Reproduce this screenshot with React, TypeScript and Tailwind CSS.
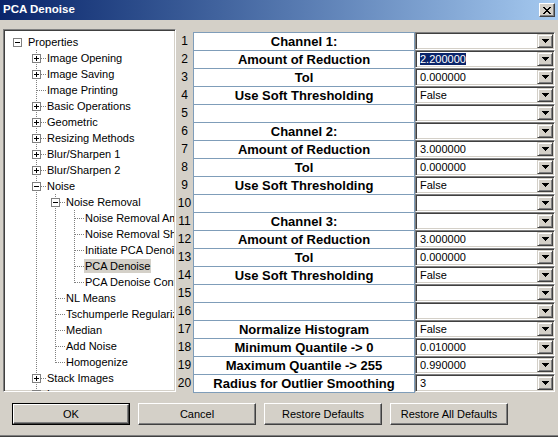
import React from "react";

type Node = {
  label: string;
  depth: number;
  box?: "+" | "-";
  last?: boolean;
  selected?: boolean;
};

const tree: Node[] = [
  { label: "Properties", depth: 0, box: "-" },
  { label: "Image Opening", depth: 1, box: "+" },
  { label: "Image Saving", depth: 1, box: "+" },
  { label: "Image Printing", depth: 1 },
  { label: "Basic Operations", depth: 1, box: "+" },
  { label: "Geometric", depth: 1, box: "+" },
  { label: "Resizing Methods", depth: 1, box: "+" },
  { label: "Blur/Sharpen 1", depth: 1, box: "+" },
  { label: "Blur/Sharpen 2", depth: 1, box: "+" },
  { label: "Noise", depth: 1, box: "-" },
  { label: "Noise Removal", depth: 2, box: "-" },
  { label: "Noise Removal Amount", depth: 3 },
  { label: "Noise Removal Sharpness", depth: 3 },
  { label: "Initiate PCA Denoise", depth: 3 },
  { label: "PCA Denoise", depth: 3, selected: true },
  { label: "PCA Denoise Control", depth: 3, last: true },
  { label: "NL Means", depth: 2 },
  { label: "Tschumperle Regularization", depth: 2 },
  { label: "Median", depth: 2 },
  { label: "Add Noise", depth: 2 },
  { label: "Homogenize", depth: 2, last: true },
  { label: "Stack Images", depth: 1, box: "+" },
  { label: "Layers", depth: 1, box: "+" },
];

// which ancestor columns still carry a vertical line
const guides: Record<number, boolean[]> = {
  0: [],
  1: [false],
  2: [false, true],
  3: [false, true, true],
};

const rows: { label: string; value: string; selected?: boolean }[] = [
  { label: "Channel 1:", value: "" },
  { label: "Amount of Reduction", value: "2.200000", selected: true },
  { label: "Tol", value: "0.000000" },
  { label: "Use Soft Thresholding", value: "False" },
  { label: "", value: "" },
  { label: "Channel 2:", value: "" },
  { label: "Amount of Reduction", value: "3.000000" },
  { label: "Tol", value: "0.000000" },
  { label: "Use Soft Thresholding", value: "False" },
  { label: "", value: "" },
  { label: "Channel 3:", value: "" },
  { label: "Amount of Reduction", value: "3.000000" },
  { label: "Tol", value: "0.000000" },
  { label: "Use Soft Thresholding", value: "False" },
  { label: "", value: "" },
  { label: "", value: "" },
  { label: "Normalize Histogram", value: "False" },
  { label: "Minimum Quantile -> 0", value: "0.010000" },
  { label: "Maximum Quantile -> 255", value: "0.990000" },
  { label: "Radius for Outlier Smoothing", value: "3" },
];

function Connector({ node }: { node: Node }) {
  const root = node.depth === 0;
  return (
    <svg width="19" height="16" className="shrink-0" shapeRendering="crispEdges">
      {!root && (
        <path
          d={`M9.5 0V${node.last ? 9 : 16}M10 8.5H19`}
          stroke="#808080"
          strokeDasharray="1 1"
          fill="none"
        />
      )}
      {node.box && (
        <>
          <rect x="5.5" y="4.5" width="8" height="8" fill="#fff" stroke="#808080" />
          <path d="M7 8.5H12" stroke="#000" />
          {node.box === "+" && <path d="M9.5 6V11" stroke="#000" />}
        </>
      )}
    </svg>
  );
}

function Guide({ on }: { on: boolean }) {
  return (
    <svg width="19" height="16" className="shrink-0" shapeRendering="crispEdges">
      {on && <path d="M9.5 0V16" stroke="#808080" strokeDasharray="1 1" fill="none" />}
    </svg>
  );
}

function DropArrow() {
  return (
    <svg width="7" height="4" shapeRendering="crispEdges">
      <path d="M0 0h7v1H0zM1 1h5v1H1zM2 2h3v1H2zM3 3h1v1H3z" fill="#000" />
    </svg>
  );
}

function Combo({ value, selected }: { value: string; selected?: boolean }) {
  return (
    <div className="w-[140px] h-[18px] flex bg-white border border-t-[#808080] border-l-[#808080] border-b-white border-r-white shadow-[inset_1px_1px_0_#404040,inset_-1px_-1px_0_#d4d0c8]">
      <div className="flex-1 flex items-center pl-[4px] text-[11px] text-black overflow-hidden whitespace-nowrap">
        {selected ? (
          <span className="bg-[#0a246a] text-white leading-[12px]">{value}</span>
        ) : (
          value
        )}
      </div>
      <div className="w-[16px] h-[14px] m-[1px] flex items-center justify-center bg-[#d4d0c8] border border-t-[#d4d0c8] border-l-[#d4d0c8] border-b-[#404040] border-r-[#404040] shadow-[inset_1px_1px_0_#fff,inset_-1px_-1px_0_#808080]">
        <DropArrow />
      </div>
    </div>
  );
}

function DialogButton({ label, isDefault }: { label: string; isDefault?: boolean }) {
  const inner = (
    <div className="w-full h-full flex items-center justify-center bg-[#d4d0c8] border border-t-white border-l-white border-b-[#404040] border-r-[#404040] shadow-[inset_-1px_-1px_0_#808080] text-[11px] text-black">
      {label}
    </div>
  );
  return (
    <div className={`w-[118px] h-[22px] ${isDefault ? "border border-black" : ""}`}>{inner}</div>
  );
}

export default function App() {
  return (
    <div className="w-[558px] h-[437px] bg-[#d4d0c8] flex flex-col overflow-hidden font-['Liberation_Sans',Arial,sans-serif]">
      {/* title bar */}
      <div className="h-[20px] shrink-0 flex items-center justify-between pl-[3px] pr-[3px] bg-gradient-to-r from-[#0a246a] to-[#a6caf0]">
        <span className="text-white font-bold text-[11.5px]">PCA Denoise</span>
        <div className="w-[16px] h-[14px] flex items-center justify-center bg-[#d4d0c8] border border-t-white border-l-white border-b-[#404040] border-r-[#404040] shadow-[inset_-1px_-1px_0_#808080]">
          <svg width="8" height="7" shapeRendering="crispEdges">
            <path d="M0 0h2v1H0zM6 0h2v1H6zM1 1h2v1H1zM5 1h2v1H5zM2 2h4v1H2zM3 3h2v1H3zM2 4h4v1H2zM1 5h2v1H1zM5 5h2v1H5zM0 6h2v1H0zM6 6h2v1H6z" fill="#000" />
          </svg>
        </div>
      </div>

      {/* main area */}
      <div className="flex pt-[9px] pl-[3px]">
        {/* tree */}
        <div className="w-[173px] h-[363px] shrink-0 bg-white overflow-hidden border border-t-[#808080] border-l-[#808080] border-b-white border-r-white shadow-[inset_1px_1px_0_#404040,inset_-1px_-1px_0_#d4d0c8]">
          <div className="pt-[4px] pl-[4px] pr-[1px] text-[11px] text-black">
            {tree.map((node, i) => (
              <div key={i} className="h-[16px] flex items-center whitespace-nowrap overflow-hidden">
                {guides[node.depth].map((on, j) => (
                  <Guide key={j} on={on} />
                ))}
                <Connector node={node} />
                <span
                  className={`min-w-0 overflow-hidden px-[1px] leading-[14px] ${node.selected ? "bg-[#d4d0c8]" : ""}`}
                >
                  {node.label}
                </span>
              </div>
            ))}
          </div>
        </div>

        {/* property grid */}
        <div className="pt-[3px] flex">
          <div className="w-[17px] flex flex-col">
            {rows.map((_, i) => (
              <div
                key={i}
                className="h-[18px] flex items-center justify-center text-[12px] text-black"
              >
                {i + 1}
              </div>
            ))}
          </div>
          <div className="w-[222px] flex flex-col bg-white border-x border-b border-[#7f9db9]">
            {rows.map((r, i) => (
              <div
                key={i}
                className="h-[18px] flex items-center justify-center border-t border-[#7f9db9] text-[13px] font-bold text-black whitespace-nowrap"
              >
                {r.label}
              </div>
            ))}
          </div>
          <div className="flex flex-col">
            {rows.map((r, i) => (
              <Combo key={i} value={r.value} selected={r.selected} />
            ))}
          </div>
        </div>
      </div>

      {/* buttons */}
      <div className="flex gap-[8px] pl-[12px] mt-[10px]">
        <DialogButton label="OK" isDefault />
        <DialogButton label="Cancel" />
        <DialogButton label="Restore Defaults" />
        <DialogButton label="Restore All Defaults" />
      </div>

      <div className="mt-auto h-[2px] border-t border-[#808080] bg-[#404040]" />
    </div>
  );
}
